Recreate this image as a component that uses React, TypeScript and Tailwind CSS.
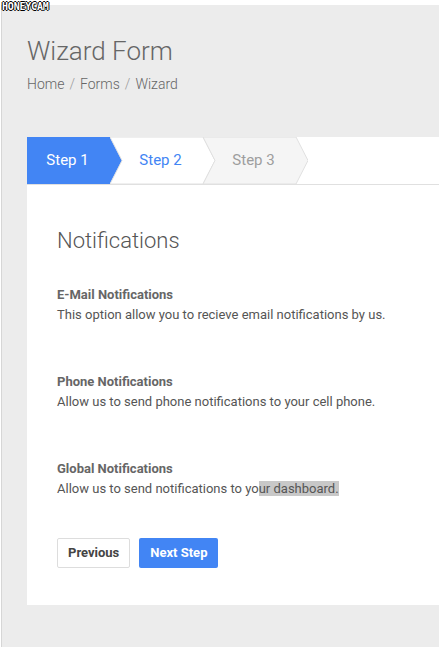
import React from "react";

const font = { fontFamily: "Roboto, 'Noto Sans', sans-serif" };

function Step({
  label,
  width,
  first,
  state,
}: {
  label: string;
  width: number;
  first?: boolean;
  state: "active" | "next" | "todo";
}) {
  const h = 47;
  const tip = 12;
  const pts = first
    ? `0,0 ${width - tip},0 ${width},${h / 2} ${width - tip},${h} 0,${h}`
    : `0,0 ${width - tip},0 ${width},${h / 2} ${width - tip},${h} 0,${h} ${tip},${h / 2}`;
  const fill = state === "active" ? "#4285f4" : state === "todo" ? "#f5f5f5" : "#ffffff";
  const stroke = state === "active" ? "none" : "#e0e0e0";
  const text =
    state === "active" ? "text-white" : state === "next" ? "text-[#4285f4]" : "text-[#9e9e9e]";
  return (
    <div
      className={`relative h-[47px] flex items-center justify-center shrink-0 ${first ? "" : "-ml-[12px]"}`}
      style={{ width }}
    >
      <svg className="absolute inset-0" width={width} height={h} viewBox={`0 0 ${width} ${h}`}>
        <polygon points={pts} fill={fill} stroke={stroke} strokeWidth={state === "active" ? 0 : 1} />
      </svg>
      <span className={`relative text-[15px] ${text} ${first ? "pr-[14px]" : "pl-[8px] pr-[12px]"}`}>{label}</span>
    </div>
  );
}

function Notice({ title, children }: { title: string; children: React.ReactNode }) {
  return (
    <div className="flex flex-col">
      <div className="text-[13px] font-bold text-[#666] leading-[20px]">{title}</div>
      <div className="text-[13px] text-[#555] leading-[20px]">{children}</div>
    </div>
  );
}

export default function App() {
  return (
    <div className="relative bg-white w-[439px] h-[647px] overflow-hidden pt-[5px] pl-px" style={font}>
      {/* capture watermark */}
      <span className="absolute left-[2px] top-[1px] text-[10px] leading-[12px] font-bold text-white tracking-[-0.2px] [font-family:'DejaVu_Sans_Mono',monospace] [text-shadow:1px_0_0_#000,-1px_0_0_#000,0_1px_0_#000,0_-1px_0_#000]">
        HONEYCAM
      </span>
      <div className="h-[642px] bg-[#ececec] border-l border-[#d6d6d6] pl-[25px] pt-[29px] overflow-hidden">
        <h1 className="text-[26px] font-light text-[#666] leading-[34px]">Wizard Form</h1>
        <div className="mt-[6px] text-[14px] font-light text-[#666] leading-[20px] flex gap-[5px]">
          <span>Home</span>
          <span className="text-[#999]">/</span>
          <span>Forms</span>
          <span className="text-[#999]">/</span>
          <span>Wizard</span>
        </div>
        <div className="mt-[43px] bg-white w-[500px] h-[468px]">
          <div className="flex border-b border-[#e0e0e0] h-[48px]">
            <Step label="Step 1" width={95} first state="active" />
            <Step label="Step 2" width={105} state="next" />
            <Step label="Step 3" width={105} state="todo" />
          </div>
          <div className="pl-[30px] pt-[41px]">
            <h2 className="text-[22px] font-light text-[#555] leading-[30px]">Notifications</h2>
            <div className="mt-[29px] flex flex-col gap-[47px]">
              <Notice title="E-Mail Notifications">
                This option allow you to recieve email notifications by us.
              </Notice>
              <Notice title="Phone Notifications">
                Allow us to send phone notifications to your cell phone.
              </Notice>
              <Notice title="Global Notifications">
                Allow us to send notifications to yo<span className="bg-[#c8c8c8]">ur dashboard.</span>
              </Notice>
            </div>
            <div className="mt-[39px] flex gap-[9px]">
              <button className="h-[30px] px-[10px] border border-[#ddd] rounded-[2px] bg-white text-[13px] font-bold text-[#444]">
                Previous
              </button>
              <button className="h-[30px] px-[11px] rounded-[2px] bg-[#4285f4] text-[13px] font-bold text-white">
                Next Step
              </button>
            </div>
          </div>
        </div>
      </div>
    </div>
  );
}
